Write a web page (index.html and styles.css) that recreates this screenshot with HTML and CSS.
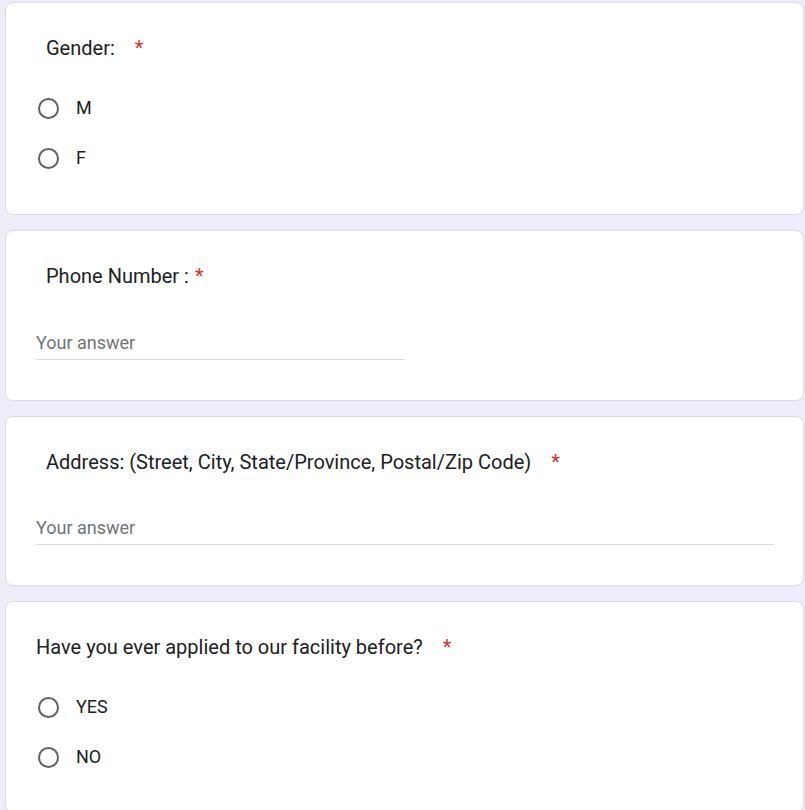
FILE: index.html
```html
<!DOCTYPE html>
<html>
<head>
<meta charset="utf-8">
<link rel="stylesheet" href="styles.css">
</head>
<body>
<div class="form">
  <div class="card">
    <div class="title indent">Gender:<span class="req wide">*</span></div>
    <div class="options">
      <div class="option"><span class="radio"><span class="circle"></span></span><span class="opt-label">M</span></div>
      <div class="option"><span class="radio"><span class="circle"></span></span><span class="opt-label">F</span></div>
    </div>
  </div>
  <div class="card">
    <div class="title indent">Phone Number :<span class="req">*</span></div>
    <div class="answer short">Your answer</div>
  </div>
  <div class="card">
    <div class="title indent">Address: (Street, City, State/Province, Postal/Zip Code)<span class="req wide">*</span></div>
    <div class="answer long">Your answer</div>
  </div>
  <div class="card">
    <div class="title">Have you ever applied to our facility before?<span class="req wide">*</span></div>
    <div class="options">
      <div class="option"><span class="radio"><span class="circle"></span></span><span class="opt-label">YES</span></div>
      <div class="option"><span class="radio"><span class="circle"></span></span><span class="opt-label">NO</span></div>
    </div>
  </div>
</div>
</body>
</html>
```
FILE: styles.css
```css
html, body {
  margin: 0;
  padding: 0;
  background: #f0ebf8;
}
body {
  font-family: Roboto, "Liberation Sans", Arial, sans-serif;
  color: #202124;
}
.form {
  padding: 2px 0 0 5px;
  display: flex;
  flex-direction: column;
  gap: 15px;
}
.card {
  background: #fff;
  border: 1px solid #dadce0;
  border-radius: 8px;
  padding: 33px 30px 30px 30px;
  box-sizing: content-box;
  width: 737px;
}
.card:first-child {
  padding-bottom: 31px;
}
.title {
  font-size: 20px;
  line-height: 24px;
  color: #202124;
}
.title.indent {
  padding-left: 10px;
}
.req {
  color: #d93025;
  margin-left: 6px;
}
.req.wide {
  margin-left: 20px;
}
.options {
  margin-top: 23px;
  display: flex;
  flex-direction: column;
}
.option {
  height: 50px;
  display: flex;
  align-items: center;
}
.radio {
  width: 24px;
  height: 24px;
  display: flex;
  align-items: center;
  justify-content: center;
}
.circle {
  width: 17px;
  height: 17px;
  border: 2px solid #5f6368;
  border-radius: 50%;
}
.opt-label {
  margin-left: 16px;
  font-size: 18px;
  line-height: 24px;
}
.answer {
  margin-top: 43px;
  font-size: 18px;
  line-height: 24px;
  color: #70757a;
  padding-bottom: 4px;
  border-bottom: 1px solid #dadce0;
  margin-bottom: 10px;
}
.answer.short {
  width: 369px;
}
.answer.long {
  width: 738px;
  margin-top: 42px;
}
```
